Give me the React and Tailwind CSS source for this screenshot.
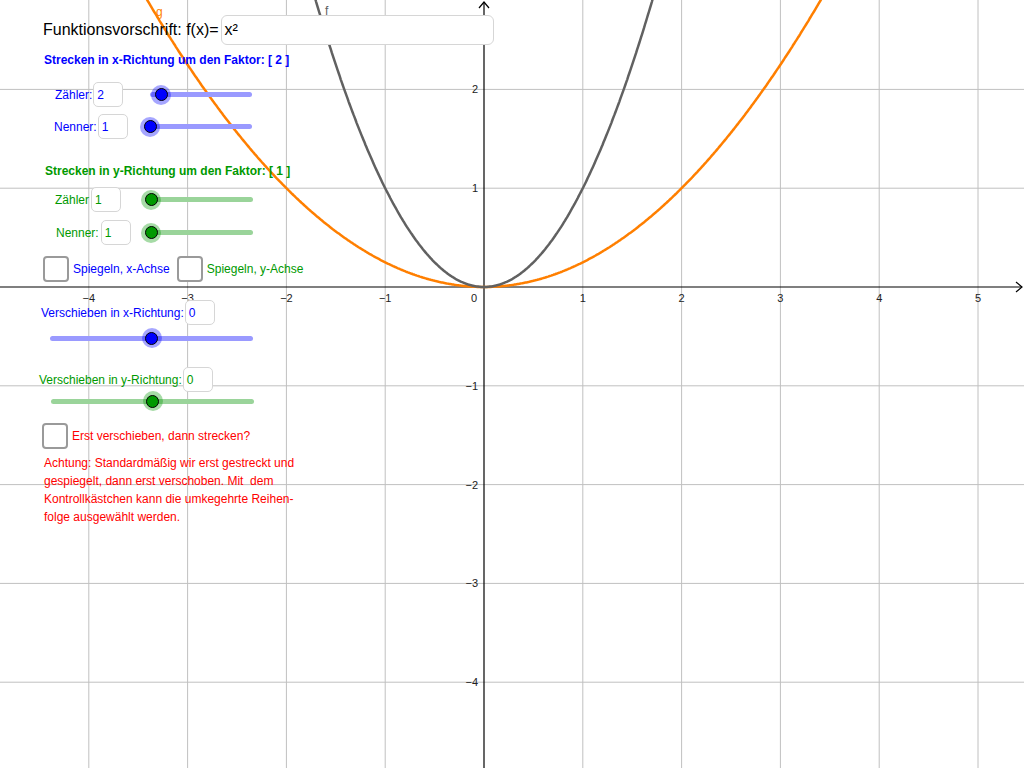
import React from 'react'

const OX = 484
const OY = 287
const S = 98.8
const W = 1024
const H = 768

const BLUE = '#0000ff'
const GREEN = '#009900'

const px = (x) => OX + x * S
const py = (y) => OY - y * S

function curve(fn, from, to) {
  const pts = []
  for (let x = from; x <= to + 1e-9; x += 0.01) {
    pts.push(`${px(x).toFixed(1)},${py(fn(x)).toFixed(1)}`)
  }
  return 'M' + pts.join(' L')
}

function Graph() {
  const xs = [-4, -3, -2, -1, 1, 2, 3, 4, 5]
  const ys = [2, 1, -1, -2, -3, -4]
  return (
    <svg className="absolute inset-0" width={W} height={H} viewBox={`0 0 ${W} ${H}`}>
      {xs.map((k) => (
        <line key={'gx' + k} x1={px(k)} y1={0} x2={px(k)} y2={H} stroke="#c0c0c0" strokeWidth="1" />
      ))}
      {ys.map((k) => (
        <line key={'gy' + k} x1={0} y1={py(k)} x2={W} y2={py(k)} stroke="#c0c0c0" strokeWidth="1" />
      ))}
      {/* axes */}
      <line x1={0} y1={OY} x2={W - 2} y2={OY} stroke="#000" strokeWidth="1.2" />
      <line x1={OX} y1={H} x2={OX} y2={2} stroke="#000" strokeWidth="1.2" />
      <path d={`M${W - 8},${OY - 5} L${W - 2},${OY} L${W - 8},${OY + 5}`} fill="none" stroke="#000" strokeWidth="1.2" />
      <path d={`M${OX - 5},8 L${OX},2 L${OX + 5},8`} fill="none" stroke="#000" strokeWidth="1.2" />

      <g fontFamily="'Liberation Sans', Arial, sans-serif" fontSize="11" fill="#222">
        {xs.map((k) => (
          <text key={'tx' + k} x={px(k)} y={OY + 15} textAnchor="middle">
            {k < 0 ? '\u2212' + -k : k}
          </text>
        ))}
        <text x={OX - 7} y={OY + 15} textAnchor="end">0</text>
        {ys.map((k) => (
          <text key={'ty' + k} x={OX - 6} y={py(k) + 4} textAnchor="end">
            {k < 0 ? '\u2212' + -k : k}
          </text>
        ))}
      </g>

      <path d={curve((x) => (x * x) / 4, -3.6, 3.6)} fill="none" stroke="#ff7f00" strokeWidth="2.5" />
      <path d={curve((x) => x * x, -1.8, 1.8)} fill="none" stroke="#616161" strokeWidth="2.5" />
      <text x={325} y={15} fontFamily="'Liberation Sans', Arial, sans-serif" fontSize="12" fill="#616161">f</text>
      <text x={156} y={16} fontFamily="'Liberation Sans', Arial, sans-serif" fontSize="12" fill="#ff7f00">g</text>
    </svg>
  )
}

function Field({ value, color, className = '' }) {
  return (
    <div
      className={`w-[30px] h-[25px] rounded-[5px] border border-[#d6d6d6] bg-white flex items-center pl-[3px] text-[12px] ${className}`}
      style={{ color }}
    >
      {value}
    </div>
  )
}

function Slider({ width, value, min, max, blue }) {
  const left = ((value - min) / (max - min)) * width
  return (
    <div className={`relative h-[20px] flex items-center ${width === 102 ? 'w-[102px]' : 'w-[203px]'}`}>
      <div className={`h-[5px] w-full rounded-full ${blue ? 'bg-[#9a9aff]' : 'bg-[#9ad49a]'}`} />
      <div
        className={`absolute top-0 w-[20px] h-[20px] rounded-full flex items-center justify-center ${
          blue ? 'bg-[rgba(0,0,255,0.35)]' : 'bg-[rgba(0,153,0,0.35)]'
        }`}
        style={{ left: left - 10 }}
      >
        <div className={`w-[13px] h-[13px] rounded-full border border-black ${blue ? 'bg-[#0000ff]' : 'bg-[#009900]'}`} />
      </div>
    </div>
  )
}

function Check() {
  return <div className="w-[26px] h-[26px] rounded-[4px] border-2 border-[#9a9a9a] bg-white" />
}

export default function App() {
  return (
    <div className="relative w-[1024px] h-[768px] overflow-hidden bg-white font-['Liberation_Sans',Arial,sans-serif]">
      <Graph />

      <div className="absolute left-0 top-0 w-[520px] flex flex-col">
        {/* Funktionsvorschrift */}
        <div className="mt-[15px] h-[30px] pl-[43px] flex items-center">
          <span className="text-[16px] text-black">Funktionsvorschrift: f(x)=</span>
          <div className="ml-[2px] w-[273px] h-[30px] rounded-[6px] border border-[#d6d6d6] bg-white flex items-center pl-[3px] text-[16px] text-black">
            x²
          </div>
        </div>

        {/* Strecken x */}
        <div className="mt-[8px] pl-[44px] text-[12px] leading-[14px] font-bold text-[#0000ff]">
          Strecken in x-Richtung um den Faktor: [ 2 ]
        </div>
        <div className="mt-[15px] h-[25px] flex items-center">
          <div className="w-[150px] pl-[55px] flex items-center text-[12px] text-[#0000ff]">
            <span>Zähler:</span>
            <Field value="2" color={BLUE} className="ml-[1px]" />
          </div>
          <Slider width={102} value={2} min={1} max={10} blue />
        </div>
        <div className="mt-[7px] h-[25px] flex items-center">
          <div className="w-[150px] pl-[54px] flex items-center text-[12px] text-[#0000ff]">
            <span>Nenner:</span>
            <Field value="1" color={BLUE} className="ml-[1px]" />
          </div>
          <Slider width={102} value={1} min={1} max={10} blue />
        </div>

        {/* Strecken y */}
        <div className="mt-[25px] pl-[45px] text-[12px] leading-[14px] font-bold text-[#009900]">
          Strecken in y-Richtung um den Faktor: [ 1 ]
        </div>
        <div className="mt-[9px] h-[25px] flex items-center">
          <div className="w-[151px] pl-[55px] flex items-center text-[12px] text-[#009900]">
            <span>Zähler</span>
            <Field value="1" color={GREEN} className="ml-[2px]" />
          </div>
          <Slider width={102} value={1} min={1} max={10} />
        </div>
        <div className="mt-[8px] h-[25px] flex items-center">
          <div className="w-[151px] pl-[56px] flex items-center text-[12px] text-[#009900]">
            <span>Nenner:</span>
            <Field value="1" color={GREEN} className="ml-[2px]" />
          </div>
          <Slider width={102} value={1} min={1} max={10} />
        </div>

        {/* Spiegeln */}
        <div className="mt-[10px] h-[27px] pl-[43px] flex items-center text-[12px]">
          <Check />
          <span className="ml-[4px] text-[#0000ff]">Spiegeln, x-Achse</span>
          <div className="ml-[7px]">
            <Check />
          </div>
          <span className="ml-[4px] text-[#009900]">Spiegeln, y-Achse</span>
        </div>

        {/* Verschieben x */}
        <div className="mt-[18px] h-[25px] pl-[41px] flex items-center text-[12px] text-[#0000ff]">
          <span>Verschieben in x-Richtung:</span>
          <Field value="0" color={BLUE} className="ml-[1px]" />
        </div>
        <div className="mt-[3px] pl-[50px] flex">
          <Slider width={203} value={0} min={-5} max={5} blue />
        </div>

        {/* Verschieben y */}
        <div className="mt-[19px] h-[25px] pl-[39px] flex items-center text-[12px] text-[#009900]">
          <span>Verschieben in y-Richtung:</span>
          <Field value="0" color={GREEN} className="ml-[1px]" />
        </div>
        <div className="-mt-[1px] pl-[51px] flex">
          <Slider width={203} value={0} min={-5} max={5} />
        </div>

        {/* Reihenfolge */}
        <div className="mt-[12px] h-[26px] pl-[42px] flex items-center text-[12px] text-[#ff0000]">
          <Check />
          <span className="ml-[4px]">Erst verschieben, dann strecken?</span>
        </div>
        <div className="mt-[5px] pl-[44px] text-[12px] leading-[18px] text-[#ff0000] whitespace-pre">
          <div>Achtung: Standardmäßig wir erst gestreckt und</div>
          <div>gespiegelt, dann erst verschoben. Mit  dem</div>
          <div>Kontrollkästchen kann die umkegehrte Reihen-</div>
          <div>folge ausgewählt werden.</div>
        </div>
      </div>
    </div>
  )
}
